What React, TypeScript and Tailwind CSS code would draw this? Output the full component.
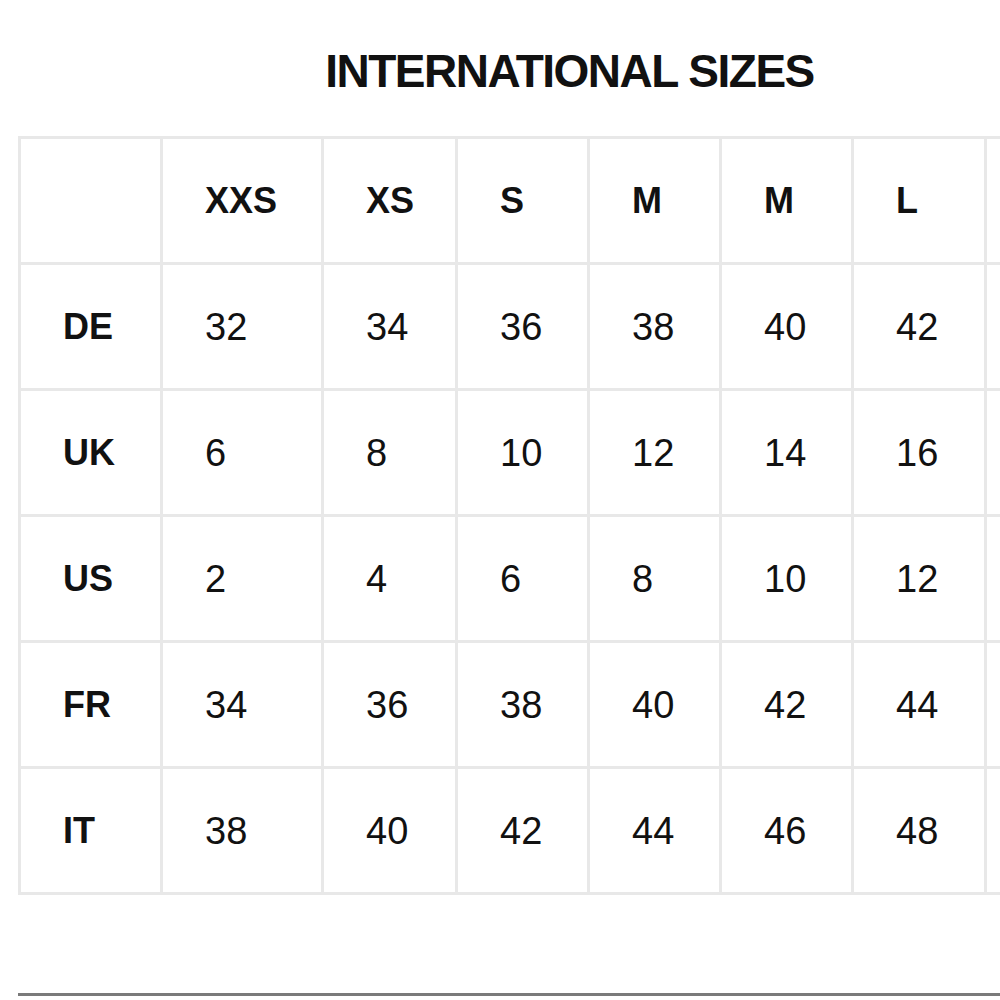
const sizes = ["XXS", "XS", "S", "M", "M", "L", ""];

const rows: { label: string; values: string[] }[] = [
  { label: "DE", values: ["32", "34", "36", "38", "40", "42", ""] },
  { label: "UK", values: ["6", "8", "10", "12", "14", "16", ""] },
  { label: "US", values: ["2", "4", "6", "8", "10", "12", ""] },
  { label: "FR", values: ["34", "36", "38", "40", "42", "44", ""] },
  { label: "IT", values: ["38", "40", "42", "44", "46", "48", ""] },
];

function Cell({ children, bold }: { children?: React.ReactNode; bold?: boolean }) {
  return (
    <div
      className={
        "bg-white flex items-center pl-[42px] text-[#111] leading-none whitespace-nowrap " +
        (bold ? "font-bold text-[36px]" : "font-normal text-[38px]")
      }
    >
      {children}
    </div>
  );
}

export default function App() {
  return (
    <div className="w-[1000px] h-[1000px] bg-white overflow-hidden font-['Liberation_Sans',Arial,sans-serif]">
      <div className="pl-[18px] pt-[48px] w-[1121px]">
        <h1 className="w-[1103px] text-center text-[46px] leading-none font-bold tracking-[-1.5px] text-[#111]">
          INTERNATIONAL SIZES
        </h1>

        <div className="mt-[42px] w-[1103px] grid grid-cols-[139px_158px_131px_129px_129px_129px_130px_131px] auto-rows-[123px] gap-[3px] p-[3px] bg-[#e8e8e8]">
          <Cell />
          {sizes.map((s, i) => (
            <Cell key={"h" + i} bold>
              {s}
            </Cell>
          ))}
          {rows.map((r) => [
            <Cell key={r.label} bold>
              {r.label}
            </Cell>,
            ...r.values.map((v, i) => <Cell key={r.label + i}>{v}</Cell>),
          ])}
        </div>

        <div className="mt-[98px] h-[3px] w-[1103px] bg-[#7a7a7a]" />
      </div>
    </div>
  );
}
